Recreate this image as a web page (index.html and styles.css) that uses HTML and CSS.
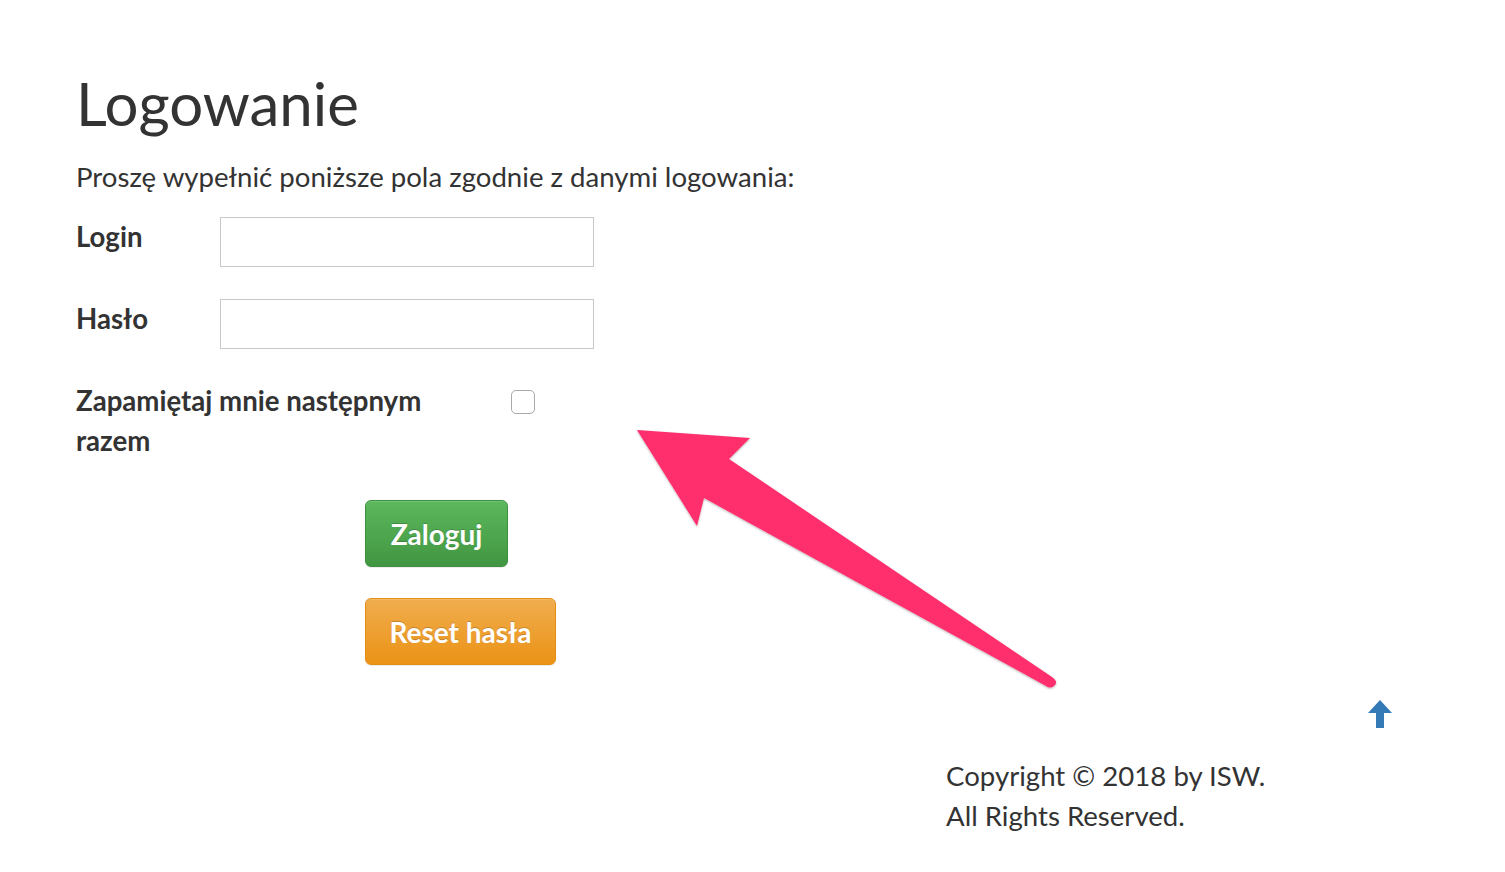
FILE: index.html
```html
<!DOCTYPE html>
<html lang="pl">
<head>
<meta charset="utf-8">
<title>Logowanie</title>
<link rel="stylesheet" href="styles.css">
</head>
<body>
<main class="page">
  <h1 class="title">Logowanie</h1>
  <p class="intro">Proszę wypełnić poniższe pola zgodnie z danymi logowania:</p>
  <form class="form">
    <div class="row">
      <label class="label" for="login">Login</label>
      <input class="field" id="login" type="text">
    </div>
    <div class="row">
      <label class="label" for="pass">Hasło</label>
      <input class="field" id="pass" type="password">
    </div>
    <div class="row remember">
      <label class="label wide" for="rem">Zapamiętaj mnie następnym razem</label>
      <input class="check" id="rem" type="checkbox">
    </div>
    <div class="actions">
      <button type="button" class="btn btn-green">Zaloguj</button>
      <button type="button" class="btn btn-orange">Reset hasła</button>
    </div>
  </form>
  <footer class="footer">
    <div class="totop">
      <svg class="up" width="24" height="28" viewBox="0 0 24 28"><path d="M12 0 L24 13 L16 13 L16 28 L8 28 L8 13 L0 13 Z" fill="#337ab7"/></svg>
    </div>
    <div class="copy">Copyright © 2018 by ISW.<br>All Rights Reserved.</div>
  </footer>
</main>
<svg class="annot" width="1505" height="872" viewBox="0 0 1505 872">
  <defs>
    <filter id="sh" x="-10%" y="-10%" width="120%" height="120%">
      <feDropShadow dx="0" dy="1" stdDeviation="1" flood-color="#000" flood-opacity="0.3"/>
    </filter>
  </defs>
  <path filter="url(#sh)" fill="#ff2e6d" d="M637 430 L750 438 L729 459 L1052 677 Q1059 682 1054 686 Q1050 689 1046 686 L704 498 L697 526 Z"/>
</svg>
</body>
</html>
```
FILE: styles.css
```css
html, body {
  margin: 0;
  padding: 0;
  background: #fff;
}
body {
  font-family: Lato, "Open Sans", sans-serif;
  font-size: 27.6px;
  line-height: 40px;
  color: #333;
}
.page {
  padding: 69px 0 0 76px;
}
.title {
  margin: 0;
  font-size: 60px;
  line-height: 68px;
  font-weight: 400;
}
.intro {
  margin: 20px 0 0;
}
.form {
  display: flex;
  flex-direction: column;
  margin-top: 20px;
}
.row {
  display: flex;
  align-items: flex-start;
  margin-bottom: 32px;
}
.label {
  width: 144px;
  font-weight: 700;
  flex: none;
}
.field {
  width: 374px;
  height: 50px;
  box-sizing: border-box;
  border: 1px solid #c8c8c8;
  border-radius: 0;
  margin: 0;
  font: inherit;
}
.remember {
  margin-bottom: 39px;
}
.wide {
  width: 380px;
}
.check {
  appearance: none;
  -webkit-appearance: none;
  width: 24px;
  height: 24px;
  box-sizing: border-box;
  border: 1px solid #a9a9a9;
  border-radius: 5px;
  background: #fff;
  margin: 9px 0 0 55px;
}
.actions {
  display: flex;
  flex-direction: column;
  align-items: flex-start;
  gap: 31px;
  padding-left: 289px;
}
.btn {
  font-family: Lato, "Open Sans", sans-serif;
  font-size: 28px;
  font-weight: 700;
  color: #fff;
  height: 67px;
  padding: 0 20px;
  white-space: nowrap;
  border-radius: 6px;
  text-shadow: 0 -1px 0 rgba(0,0,0,0.2);
  box-shadow: inset 0 1px 0 rgba(255,255,255,0.15), 0 1px 1px rgba(0,0,0,0.075);
  cursor: pointer;
}
.btn-green {
  width: 143px;
  background: linear-gradient(#5cb85c, #419641);
  border: 1px solid #3e8f3e;
}
.btn-orange {
  width: 191px;
  background: linear-gradient(#f0ad4e, #eb9316);
  border: 1px solid #e38d13;
}
.footer {
  display: flex;
  flex-direction: column;
  padding-top: 35px;
}
.totop {
  display: flex;
  padding-left: 1292px;
  height: 28px;
}
.up {
  display: block;
}
.copy {
  padding-left: 870px;
  margin-top: 28px;
}
.annot {
  position: absolute;
  left: 0;
  top: 0;
  pointer-events: none;
}
```
